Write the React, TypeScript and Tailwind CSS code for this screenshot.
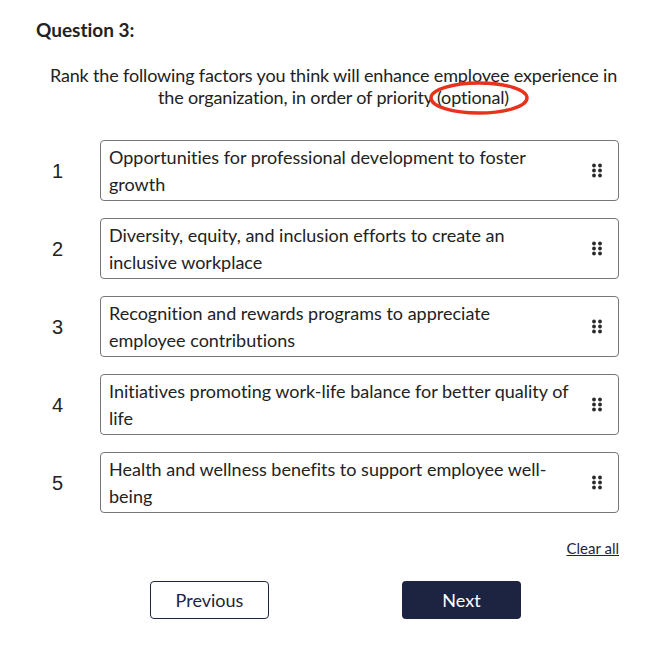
import React from "react";

const items = [
  "Opportunities for professional development to foster growth",
  "Diversity, equity, and inclusion efforts to create an inclusive workplace",
  "Recognition and rewards programs to appreciate employee contributions",
  "Initiatives promoting work-life balance for better quality of life",
  "Health and wellness benefits to support employee well-being",
];

function Grip() {
  return (
    <svg width="10" height="15" viewBox="0 0 10 15" className="shrink-0">
      {[0, 1, 2].map((r) =>
        [0, 1].map((c) => (
          <circle key={`${r}-${c}`} cx={2 + c * 6} cy={2.5 + r * 5} r="1.9" fill="#2b2b2b" />
        ))
      )}
    </svg>
  );
}

export default function App() {
  return (
    <div className="w-[667px] h-[654px] bg-white text-[#222] font-['Lato','Noto_Sans',sans-serif] [font-variant-ligatures:none]">
      <div className="pl-[36px] pt-[19px] text-[19px] font-bold leading-[22px] text-[#222]">Question 3:</div>
      <div className="relative mt-[23px] text-center text-[18px] leading-[22px] tracking-[-0.15px] text-[#222] px-[40px]">
        Rank the following factors you think will enhance employee experience in
        <br />
        the organization, in order of priority (optional)
        <svg className="absolute left-[428px] top-[16px] pointer-events-none" width="104" height="36" viewBox="0 0 104 36">
          <ellipse cx="51" cy="18" rx="48" ry="15" fill="none" stroke="#e8321c" strokeWidth="3.5" />
        </svg>
      </div>
      <div className="mt-[32px] flex flex-col gap-[17px]">
        {items.map((t, i) => (
          <div key={i} className="flex items-center">
            <div className="w-[100px] text-[20px] text-[#222] font-['Liberation_Sans',Arial,sans-serif]">
              <span className="inline-block pl-[52px]">{i + 1}</span>
            </div>
            <div className="w-[519px] h-[61px] border border-[#777] rounded-[4px] flex items-center pl-[8px] pr-[16px]">
              <div className="w-[461px] text-[18px] leading-[27px] text-[#222]">{t}</div>
              <div className="flex-1" />
              <Grip />
            </div>
          </div>
        ))}
      </div>
      <div className="mt-[25px] w-[619px] flex justify-end">
        <span className="text-[15px] underline text-[#1c2541] leading-[20px]">Clear all</span>
      </div>
      <div className="mt-[23px] flex">
        <button className="ml-[150px] w-[119px] h-[38px] rounded-[4px] border border-[#1c2442] bg-white text-[18px] text-[#1c2442]">
          Previous
        </button>
        <button className="ml-[133px] w-[119px] h-[38px] rounded-[4px] bg-[#1c2442] text-[18px] text-white">
          Next
        </button>
      </div>
    </div>
  );
}
